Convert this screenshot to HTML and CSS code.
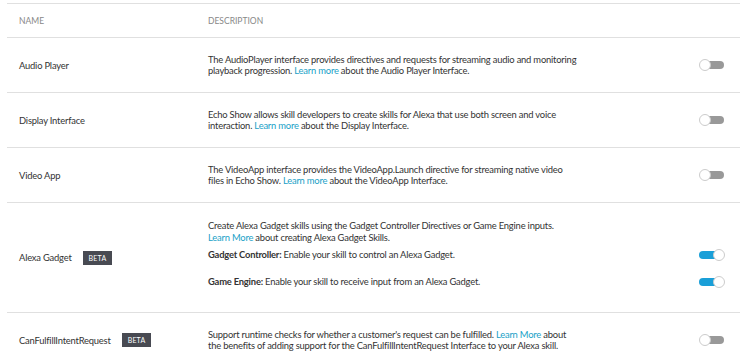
FILE: index.html
```html
<!DOCTYPE html>
<html lang="en">
<head>
  <meta charset="UTF-8" />
  <title>Interfaces</title>
  <link rel="stylesheet" href="styles.css">
</head>
<body>

  <div class="interfaces">
    <div class="row head">
      <div class="name">NAME</div>
      <div class="desc">DESCRIPTION</div>
      <div class="ctrl"></div>
    </div>

    <div class="row">
      <div class="name">Audio Player</div>
      <div class="desc">
        <p>The AudioPlayer interface provides directives and requests for streaming audio and monitoring<br>playback progression. <a href="#">Learn more</a> about the Audio Player Interface.</p>
      </div>
      <div class="ctrl"><span class="toggle"></span></div>
    </div>

    <div class="row">
      <div class="name">Display Interface</div>
      <div class="desc">
        <p>Echo Show allows skill developers to create skills for Alexa that use both screen and voice<br>interaction. <a href="#">Learn more</a> about the Display Interface.</p>
      </div>
      <div class="ctrl"><span class="toggle"></span></div>
    </div>

    <div class="row">
      <div class="name">Video App</div>
      <div class="desc">
        <p>The VideoApp interface provides the VideoApp.Launch directive for streaming native video<br>files in Echo Show. <a href="#">Learn more</a> about the VideoApp Interface.</p>
      </div>
      <div class="ctrl"><span class="toggle"></span></div>
    </div>

    <div class="row tall">
      <div class="name">Alexa Gadget <span class="beta">BETA</span></div>
      <div class="desc">
        <p>Create Alexa Gadget skills using the Gadget Controller Directives or Game Engine inputs.<br><a href="#">Learn More</a> about creating Alexa Gadget Skills.</p>
        <div class="sub">
          <p><b>Gadget Controller:</b> Enable your skill to control an Alexa Gadget.</p>
          <span class="toggle on"></span>
        </div>
        <div class="sub">
          <p><b>Game Engine:</b> Enable your skill to receive input from an Alexa Gadget.</p>
          <span class="toggle on"></span>
        </div>
      </div>
    </div>

    <div class="row">
      <div class="name">CanFulfillIntentRequest <span class="beta">BETA</span></div>
      <div class="desc">
        <p>Support runtime checks for whether a customer's request can be fulfilled. <a href="#">Learn More</a> about<br>the benefits of adding support for the CanFulfillIntentRequest Interface to your Alexa skill.</p>
      </div>
      <div class="ctrl"><span class="toggle"></span></div>
    </div>
  </div>

</body>
</html>
```

FILE: styles.css
```css
body {
  margin: 0;
  background: #fff;
  font-family: Lato, "Liberation Sans", Arial, sans-serif;
  font-size: 9.4px;
  letter-spacing: -0.2px;
  color: #333;
}

.interfaces {
  margin: 3px 0 0 7px;
  border-top: 1px solid #e0e0e0;
}

.row {
  display: grid;
  grid-template-columns: 201px 1fr 54px;
  align-items: center;
  min-height: 54px;
  border-bottom: 1px solid #e0e0e0;
}

.row.head {
  min-height: 33px;
  font-size: 8.5px;
  letter-spacing: 0;
  color: #888;
}

.row.tall {
  min-height: 109px;
}

.name {
  padding-left: 12px;
  display: flex;
  align-items: center;
  gap: 11px;
}

.desc {
  white-space: nowrap;
}

.desc p {
  margin: 0;
  line-height: 11.5px;
}

.row.tall .desc {
  grid-column: 2 / 4;
  display: flex;
  flex-direction: column;
  padding: 0 15px 3px 0;
}

.row.tall .desc > p {
  margin-bottom: 2px;
}

.sub {
  display: flex;
  justify-content: space-between;
  align-items: center;
  min-height: 20px;
}

.sub + .sub {
  margin-top: 7px;
}

.sub b {
  font-weight: 700;
}

a {
  color: #1a9fc7;
  text-decoration: none;
}

.beta {
  background: #484a52;
  color: #fff;
  font-size: 7px;
  padding: 3px 6px;
  letter-spacing: 0.2px;
}

.ctrl {
  display: flex;
  justify-content: flex-end;
  padding-right: 15px;
}

.toggle {
  position: relative;
  display: inline-block;
  width: 26px;
  height: 12px;
}

.toggle::before {
  content: "";
  position: absolute;
  left: 4px;
  right: 1px;
  top: 2px;
  height: 8px;
  border-radius: 4px;
  background: #999;
}

.toggle::after {
  content: "";
  position: absolute;
  left: 0;
  top: 0;
  width: 10px;
  height: 10px;
  border-radius: 50%;
  background: #fff;
  border: 1px solid #ccc;
}

.toggle.on::before {
  left: 0;
  right: 5px;
  background: #1a9fd8;
}

.toggle.on::after {
  left: auto;
  right: 0;
}
```
